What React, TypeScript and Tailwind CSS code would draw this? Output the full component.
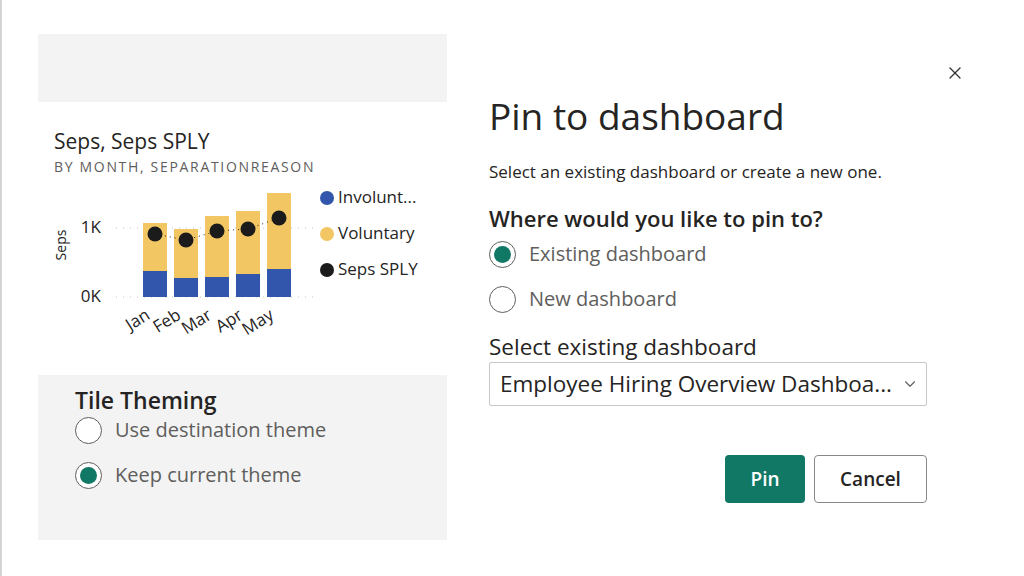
import { X, ChevronDown } from "lucide-react";

const font = { fontFamily: '"Open Sans", "Noto Sans", sans-serif' };

type Bar = { m: string; x: number; top: number; blue: number; dot: number };

const bars: Bar[] = [
  { m: "Jan", x: 143, top: 223, blue: 271, dot: 234 },
  { m: "Feb", x: 174, top: 229, blue: 278, dot: 240 },
  { m: "Mar", x: 205, top: 216, blue: 277, dot: 231 },
  { m: "Apr", x: 236, top: 211, blue: 274, dot: 229 },
  { m: "May", x: 267, top: 193, blue: 269, dot: 218 },
];

function Radio({ checked, label }: { checked?: boolean; label: string }) {
  return (
    <div className="flex items-center gap-[13px] h-[30px]">
      <span className="w-[27px] h-[27px] rounded-full border border-[#605e5c] bg-white flex items-center justify-center">
        {checked && <span className="w-[17px] h-[17px] rounded-full bg-[#117865]" />}
      </span>
      <span className="text-[20px] text-[#605e5c]">{label}</span>
    </div>
  );
}

function Chart() {
  return (
    <svg width={409} height={160} viewBox="38 185 409 160" className="block">
      <text
        x={62}
        y={245}
        transform="rotate(-90 62 245)"
        textAnchor="middle"
        dominantBaseline="middle"
        fontSize={14}
        fill="#252423"
      >
        Seps
      </text>
      <text x={101} y={228} textAnchor="end" dominantBaseline="middle" fontSize={17} fill="#252423">
        1K
      </text>
      <text x={101} y={297} textAnchor="end" dominantBaseline="middle" fontSize={17} fill="#252423">
        0K
      </text>
      <line x1={116} y1={228} x2={316} y2={228} stroke="#c8c6c4" strokeDasharray="1 6" />
      <line x1={116} y1={297} x2={316} y2={297} stroke="#c8c6c4" strokeDasharray="1 6" />
      {bars.map((b) => (
        <g key={b.m}>
          <rect x={b.x} y={b.top} width={24} height={b.blue - b.top} fill="#f3c664" />
          <rect x={b.x} y={b.blue} width={24} height={297 - b.blue} fill="#3256ab" />
        </g>
      ))}
      <polyline
        points={bars.map((b) => `${b.x + 12},${b.dot}`).join(" ")}
        fill="none"
        stroke="#252423"
        strokeDasharray="1 4"
      />
      {bars.map((b) => (
        <circle key={b.m} cx={b.x + 12} cy={b.dot} r={7.5} fill="#1b1b1b" />
      ))}
      {bars.map((b) => (
        <text
          key={b.m}
          x={b.x + 8}
          y={318}
          transform={`rotate(-32 ${b.x + 8} 318)`}
          textAnchor="end"
          fontSize={17}
          fill="#252423"
        >
          {b.m}
        </text>
      ))}
      <circle cx={327} cy={198} r={7} fill="#3256ab" />
      <text x={338} y={198} dominantBaseline="middle" fontSize={17} fill="#252423">
        Involunt...
      </text>
      <circle cx={327} cy={234} r={7} fill="#f3c664" />
      <text x={338} y={234} dominantBaseline="middle" fontSize={17} fill="#252423">
        Voluntary
      </text>
      <circle cx={327} cy={270} r={7} fill="#1b1b1b" />
      <text x={338} y={270} dominantBaseline="middle" fontSize={17} fill="#252423">
        Seps SPLY
      </text>
    </svg>
  );
}

export default function App() {
  return (
    <div className="relative w-[1024px] h-[576px] bg-white flex overflow-hidden" style={font}>
      <div className="w-[2px] h-full bg-[#d4d4d4]" />

      {/* preview tile */}
      <div className="ml-[36px] mt-[34px] w-[409px] flex flex-col">
        <div className="h-[68px] bg-[#f3f3f3]" />
        <div className="h-[273px] flex flex-col">
          <div className="pl-[16px] pt-[25px] text-[21px] leading-[28px] text-[#252423]">Seps, Seps SPLY</div>
          <div className="pl-[16px] pt-[2px] text-[14px] leading-[20px] tracking-[0.12em] text-[#605e5c]">
            BY MONTH, SEPARATIONREASON
          </div>
          <div className="mt-[8px]">
            <Chart />
          </div>
        </div>
        <div className="h-[165px] bg-[#f3f3f3] pl-[37px] pt-[11px]">
          <div className="text-[23px] leading-[28px] font-semibold text-[#252423]">Tile Theming</div>
          <div className="flex flex-col gap-[15px] mt-[1px]">
            <Radio label="Use destination theme" />
            <Radio checked label="Keep current theme" />
          </div>
        </div>
      </div>

      {/* dialog body */}
      <div className="ml-[42px] w-[438px] pt-[93px] flex flex-col">
        <h1 className="text-[37px] leading-[46px] text-[#252423]">Pin to dashboard</h1>
        <p className="mt-[22px] text-[17px] leading-[22px] text-[#252423]">
          Select an existing dashboard or create a new one.
        </p>
        <h2 className="mt-[21px] text-[22px] leading-[28px] font-semibold text-[#252423]">
          Where would you like to pin to?
        </h2>
        <div className="mt-[7px] flex flex-col gap-[15px]">
          <Radio checked label="Existing dashboard" />
          <Radio label="New dashboard" />
        </div>
        <label className="mt-[19px] text-[22.5px] leading-[28px] text-[#252423]">Select existing dashboard</label>
        <div className="mt-[1px] h-[44px] border border-[#c8c6c4] rounded-[2px] flex items-center pl-[10px] pr-[7px]">
          <span className="flex-1 text-[22.5px] text-[#252423] whitespace-nowrap overflow-hidden">
            Employee Hiring Overview Dashboa...
          </span>
          <ChevronDown size={18} strokeWidth={1.5} className="text-[#605e5c]" />
        </div>
        <div className="mt-[49px] flex justify-end gap-[9px]">
          <button className="w-[80px] h-[48px] rounded-[4px] bg-[#117865] text-white text-[19px] font-semibold">
            Pin
          </button>
          <button className="w-[113px] h-[48px] rounded-[4px] border border-[#8a8886] bg-white text-[#252423] text-[19px] font-semibold">
            Cancel
          </button>
        </div>
      </div>

      <button className="absolute left-[945px] top-[63px] w-[20px] h-[20px] flex items-center justify-center text-[#323130]">
        <X size={20} strokeWidth={1.5} />
      </button>
    </div>
  );
}
